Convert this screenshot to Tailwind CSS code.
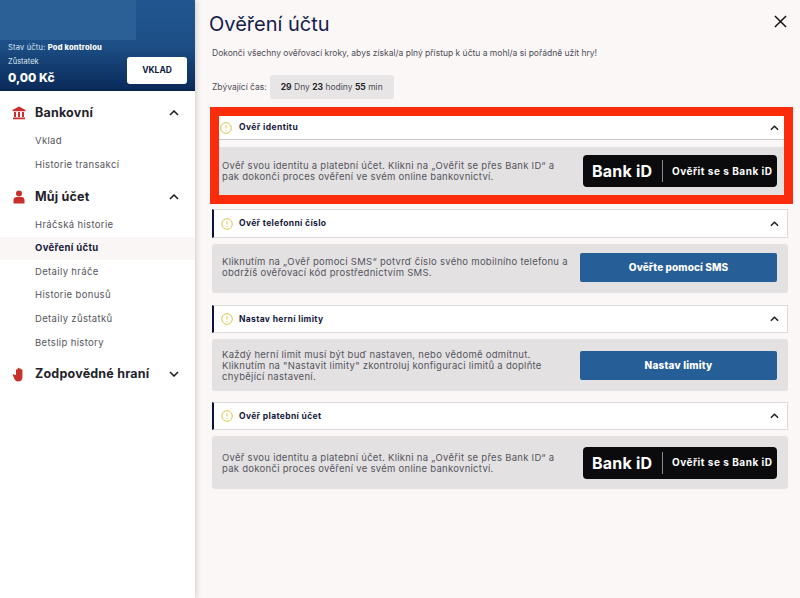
<!DOCTYPE html>
<html lang="cs">
<head>
  <meta charset="UTF-8">
  <title>Ověření účtu</title>
  <script src="https://cdn.jsdelivr.net/npm/@tailwindcss/browser@4"></script>
</head>
<body class="w-[800px] h-[598px] overflow-hidden bg-[#fbf7f7] font-['Inter',sans-serif]">
  <div class="flex h-[598px]">
    <!-- Sidebar -->
    <aside class="w-[195px] h-full shrink-0 bg-white shadow-[1px_0_6px_rgba(0,0,0,0.18)] z-10">
      <div class="h-[91px] bg-gradient-to-b from-[#215690] via-[#1d4f86] to-[#0a2a5a] border-b border-[#0a1f45]">
        <div class="h-[40px] w-[136px] bg-[#2b6097]"></div>
        <div class="flex justify-between pl-2 pr-[8px]">
          <div class="pt-[3px] text-white">
            <p class="text-[7.5px] tracking-[0.2px] leading-[10px] whitespace-nowrap text-[#dbe6f2]">Stav účtu: <b class="font-extrabold text-white">Pod kontrolou</b></p>
            <p class="text-[7.5px] leading-[10px] mt-[4px] text-[#dbe6f2]">Zůstatek</p>
            <p class="text-[12px] leading-[15px] mt-[3px] font-extrabold">0,00 Kč</p>
          </div>
          <button class="w-[60px] h-[27px] mt-[17px] bg-white rounded-[3px] text-[8.5px] font-bold text-[#0d1b3d]">VKLAD</button>
        </div>
      </div>

      <nav class="pt-[12px]">
        <div class="flex items-center h-[20px] pl-[12px] pr-[16px]">
          <svg class="w-[14px] h-[14px] text-[#c9302c]" viewBox="0 0 14 14" fill="currentColor"><path d="M7 0.5 13.5 4v1.2H.5V4z"/><rect x="2" y="6" width="2" height="5"/><rect x="6" y="6" width="2" height="5"/><rect x="10" y="6" width="2" height="5"/><rect x="1" y="11.5" width="12" height="1.8"/></svg>
          <span class="ml-[9px] flex-1 text-[12.5px] tracking-[0.2px] font-bold text-[#23232b]">Bankovní</span>
          <svg class="w-[10px] h-[6px] text-[#1a1a22]" viewBox="0 0 10 6" fill="none" stroke="currentColor" stroke-width="1.5"><path d="M1 5 5 1l4 4"/></svg>
        </div>
        <a class="flex items-center h-[24px] mt-[6px] pl-[35px] text-[9.5px] tracking-[0.35px] text-[#55555e]">Vklad</a>
        <a class="flex items-center h-[24px] pl-[35px] text-[9.5px] tracking-[0.35px] text-[#55555e]">Historie transakcí</a>

        <div class="flex items-center h-[20px] mt-[10px] pl-[12px] pr-[16px]">
          <svg class="w-[14px] h-[14px] text-[#c9302c]" viewBox="0 0 14 14" fill="currentColor"><circle cx="7" cy="3.6" r="3"/><path d="M1.5 13.5V10c0-1.8 1.5-3 3-3h5c1.5 0 3 1.2 3 3v3.5z"/></svg>
          <span class="ml-[9px] flex-1 text-[12.5px] tracking-[0.2px] font-bold text-[#23232b]">Můj účet</span>
          <svg class="w-[10px] h-[6px] text-[#1a1a22]" viewBox="0 0 10 6" fill="none" stroke="currentColor" stroke-width="1.5"><path d="M1 5 5 1l4 4"/></svg>
        </div>
        <a class="flex items-center h-[23.6px] mt-[6px] pl-[35px] text-[9.5px] tracking-[0.35px] text-[#55555e]">Hráčská historie</a>
        <a class="flex items-center h-[23.6px] pl-[35px] text-[9.5px] tracking-[0.35px] font-bold text-[#14173a] bg-[#faf6f6]">Ověření účtu</a>
        <a class="flex items-center h-[23.6px] pl-[35px] text-[9.5px] tracking-[0.35px] text-[#55555e]">Detaily hráče</a>
        <a class="flex items-center h-[23.6px] pl-[35px] text-[9.5px] tracking-[0.35px] text-[#55555e]">Historie bonusů</a>
        <a class="flex items-center h-[23.6px] pl-[35px] text-[9.5px] tracking-[0.35px] text-[#55555e]">Detaily zůstatků</a>
        <a class="flex items-center h-[23.6px] pl-[35px] text-[9.5px] tracking-[0.35px] text-[#55555e]">Betslip history</a>

        <div class="flex items-center h-[20px] mt-[9.5px] pl-[12px] pr-[16px]">
          <svg class="w-[14px] h-[15px] text-[#c9302c]" viewBox="0 0 14 15" fill="currentColor"><path d="M4 8V3a.8.8 0 0 1 1.6 0V1.6a.8.8 0 0 1 1.6 0V2a.8.8 0 0 1 1.6 0v1a.8.8 0 0 1 1.6 0v7c0 3-1.7 4.5-4 4.5-2.2 0-3.3-1.2-4.2-3L1 8.5c-.4-.9.7-1.6 1.4-.8z"/></svg>
          <span class="ml-[9px] flex-1 text-[12.5px] tracking-[0.2px] font-bold text-[#23232b] whitespace-nowrap">Zodpovědné hraní</span>
          <svg class="w-[10px] h-[6px] text-[#1a1a22]" viewBox="0 0 10 6" fill="none" stroke="currentColor" stroke-width="1.5"><path d="M1 1l4 4 4-4"/></svg>
        </div>
      </nav>
    </aside>

    <!-- Main -->
    <main class="flex-1 pl-[15px] pr-[7px]">
      <div class="flex items-start justify-between h-[47px] pt-[11px] -ml-[1px]">
        <h1 class="text-[20px] leading-[26px] text-[#14204a]">Ověření účtu</h1>
        <svg class="w-[13px] h-[13px] mt-[4px] mr-[6px] text-[#111]" viewBox="0 0 14 14" fill="none" stroke="currentColor" stroke-width="1.6"><path d="M1 1l12 12M13 1 1 13"/></svg>
      </div>
      <p class="pl-[2px] text-[8.5px] leading-[12px] text-[#4b4b55]">Dokonči všechny ověřovací kroky, abys získal/a plný přístup k účtu a mohl/a si pořádně užít hry!</p>
      <div class="flex items-center gap-[3px] pl-[2px] mt-[16px] h-[24px] text-[8.5px] text-[#4b4b55]">
        <span>Zbývající čas:</span>
        <span class="flex items-center h-[24px] px-[11px] bg-[#e8e5e6] rounded-[3px] whitespace-nowrap"><b class="text-[#23232b]">29</b>&nbsp;Dny&nbsp;<b class="text-[#23232b]">23</b>&nbsp;hodiny&nbsp;<b class="text-[#23232b]">55</b>&nbsp;min</span>
      </div>

      <!-- Highlighted step -->
      <div class="w-[583px] h-[97px] mt-[8px] border-[9px] border-[#fb2c0b]">
        <div class="flex items-center h-[24px] pl-[1px] pr-[5px] bg-white border-b border-[#c8c8cc]">
          <svg class="w-[12px] h-[12px] text-[#d8c94a]" viewBox="0 0 12 12" fill="none" stroke="currentColor"><circle cx="6" cy="6" r="5.3"/><path d="M6 3.2v3.3M6 8v1"/></svg>
          <span class="ml-[7px] flex-1 text-[8.5px] tracking-[0.4px] font-bold text-[#14173a]">Ověř identitu</span>
          <svg class="w-[9px] h-[6px] text-[#1a1a22]" viewBox="0 0 10 6" fill="none" stroke="currentColor" stroke-width="1.6"><path d="M1 5 5 1l4 4"/></svg>
        </div>
        <div class="flex items-center justify-between h-[48px] mt-[7px] pl-[3px] pr-[7px] bg-[#e3e1e2]">
          <p class="text-[9.5px] tracking-[0.28px] leading-[11px] text-[#55555e] whitespace-nowrap">Ověř svou identitu a platební účet. Klikni na „Ověřit se přes Bank ID“ a<br>pak dokonči proces ověření ve svém online bankovnictví.</p>
          <button class="flex items-center w-[194px] h-[32px] shrink-0 pl-[9px] bg-[#0b0b0d] rounded-[4px] text-white whitespace-nowrap">
            <span class="w-[61px] text-left text-[16px] tracking-[0.2px] font-bold">Bank iD</span>
            <span class="w-px h-[22px] mx-[9px] bg-[#8a8a8a]"></span>
            <span class="text-[10px] tracking-[0.5px] font-bold">Ověřit se s Bank iD</span>
          </button>
        </div>
      </div>

      <div class="w-[576px] ml-[2px] mt-[5px]">
        <div class="flex items-center h-[29px] pl-[7px] pr-[8px] bg-white border border-[#dcdadc] border-l-2 border-l-[#0d1140]">
          <svg class="w-[12px] h-[12px] text-[#d8c94a]" viewBox="0 0 12 12" fill="none" stroke="currentColor"><circle cx="6" cy="6" r="5.3"/><path d="M6 3.2v3.3M6 8v1"/></svg>
          <span class="ml-[6px] flex-1 text-[8.5px] tracking-[0.35px] font-bold text-[#14173a]">Ověř telefonní číslo</span>
          <svg class="w-[9px] h-[6px] text-[#1a1a22]" viewBox="0 0 10 6" fill="none" stroke="currentColor" stroke-width="1.6"><path d="M1 5 5 1l4 4"/></svg>
        </div>
        <div class="flex items-center justify-between h-[49px] mt-[6px] pl-[10px] pr-[11px] bg-[#e3e1e2] rounded-[3px]">
          <p class="text-[9.5px] tracking-[0.28px] leading-[11px] text-[#55555e] -mt-[4px] whitespace-nowrap">Kliknutím na „Ověř pomocí SMS“ potvrď číslo svého mobilního telefonu a<br>obdržíš ověřovací kód prostřednictvím SMS.</p>
          <button class="w-[197px] h-[29px] shrink-0 -mt-[3px] bg-[#265e97] rounded-[2px] text-[10px] tracking-[0.1px] font-extrabold text-white">Ověřte pomocí SMS</button>
        </div>

        <div class="flex items-center h-[28px] mt-[12px] pl-[7px] pr-[8px] bg-white border border-[#dcdadc] border-l-2 border-l-[#0d1140]">
          <svg class="w-[12px] h-[12px] text-[#d8c94a]" viewBox="0 0 12 12" fill="none" stroke="currentColor"><circle cx="6" cy="6" r="5.3"/><path d="M6 3.2v3.3M6 8v1"/></svg>
          <span class="ml-[6px] flex-1 text-[8.5px] tracking-[0.35px] font-bold text-[#14173a]">Nastav herní limity</span>
          <svg class="w-[9px] h-[6px] text-[#1a1a22]" viewBox="0 0 10 6" fill="none" stroke="currentColor" stroke-width="1.6"><path d="M1 5 5 1l4 4"/></svg>
        </div>
        <div class="flex items-center justify-between h-[52px] mt-[6px] pl-[10px] pr-[11px] bg-[#e3e1e2] rounded-[3px]">
          <p class="text-[9.5px] tracking-[0.28px] leading-[11px] text-[#55555e] whitespace-nowrap">Každý herní limit musí být buď nastaven, nebo vědomě odmítnut.<br>Kliknutím na "Nastavit limity" zkontroluj konfiguraci limitů a doplňte<br>chybějící nastavení.</p>
          <button class="w-[197px] h-[29px] shrink-0 bg-[#265e97] rounded-[2px] text-[10px] tracking-[0.2px] font-extrabold text-white">Nastav limity</button>
        </div>

        <div class="flex items-center h-[28px] mt-[11px] pl-[7px] pr-[8px] bg-white border border-[#dcdadc] border-l-2 border-l-[#0d1140]">
          <svg class="w-[12px] h-[12px] text-[#d8c94a]" viewBox="0 0 12 12" fill="none" stroke="currentColor"><circle cx="6" cy="6" r="5.3"/><path d="M6 3.2v3.3M6 8v1"/></svg>
          <span class="ml-[6px] flex-1 text-[8.5px] tracking-[0.35px] font-bold text-[#14173a]">Ověř platební účet</span>
          <svg class="w-[9px] h-[6px] text-[#1a1a22]" viewBox="0 0 10 6" fill="none" stroke="currentColor" stroke-width="1.6"><path d="M1 5 5 1l4 4"/></svg>
        </div>
        <div class="flex items-center justify-between h-[53px] mt-[6px] pl-[10px] pr-[11px] bg-[#e3e1e2] rounded-[3px]">
          <p class="text-[9.5px] tracking-[0.28px] leading-[11px] text-[#55555e] whitespace-nowrap">Ověř svou identitu a platební účet. Klikni na „Ověřit se přes Bank ID“ a<br>pak dokonči proces ověření ve svém online bankovnictví.</p>
          <button class="flex items-center w-[194px] h-[32px] shrink-0 pl-[9px] bg-[#0b0b0d] rounded-[4px] text-white whitespace-nowrap">
            <span class="w-[61px] text-left text-[16px] tracking-[0.2px] font-bold">Bank iD</span>
            <span class="w-px h-[22px] mx-[9px] bg-[#8a8a8a]"></span>
            <span class="text-[10px] tracking-[0.5px] font-bold">Ověřit se s Bank iD</span>
          </button>
        </div>
      </div>
    </main>
  </div>
</body>
</html>
